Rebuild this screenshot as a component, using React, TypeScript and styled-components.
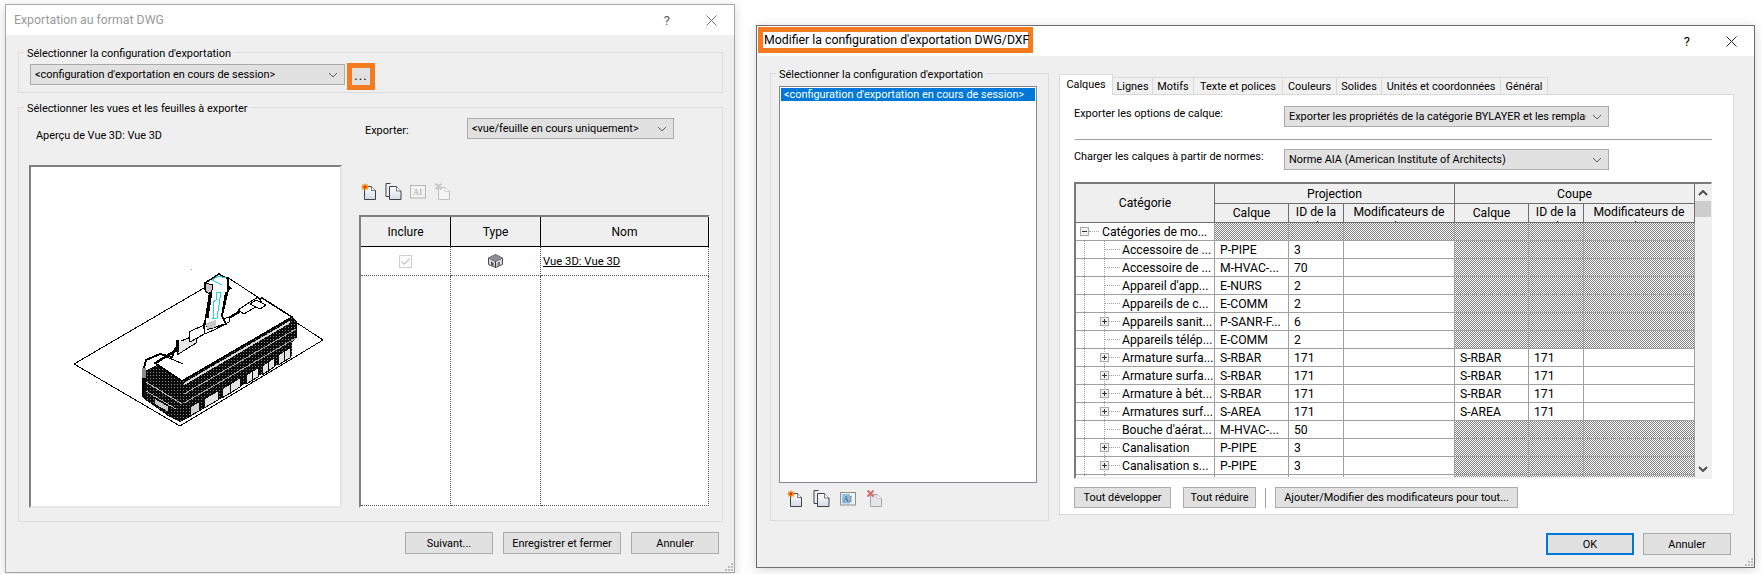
import type { ReactNode } from 'react'
import styled, { createGlobalStyle } from 'styled-components'

const HATCH = 'repeating-conic-gradient(#808080 0 25%, #ffffff 0 50%) 0 0 / 2px 2px'

const GlobalStyle = createGlobalStyle`
  html, body { margin: 0; padding: 0; background: #ffffff; }
  body {
    font-family: Roboto, "Open Sans", "Liberation Sans", sans-serif;
    font-size: 10.9px;
    color: #000;
  }
  * { box-sizing: border-box; }
`

interface LayerRow {
  name: string
  expander?: boolean
  layer: string
  id: string
  cut?: boolean
}

const layerRows: LayerRow[] = [
  { name: 'Accessoire de ...', layer: 'P-PIPE', id: '3' },
  { name: 'Accessoire de ...', layer: 'M-HVAC-...', id: '70' },
  { name: "Appareil d'app...", layer: 'E-NURS', id: '2' },
  { name: 'Appareils de c...', layer: 'E-COMM', id: '2' },
  { name: 'Appareils sanit...', expander: true, layer: 'P-SANR-F...', id: '6' },
  { name: 'Appareils télép...', layer: 'E-COMM', id: '2' },
  { name: 'Armature surfa...', expander: true, layer: 'S-RBAR', id: '171', cut: true },
  { name: 'Armature surfa...', expander: true, layer: 'S-RBAR', id: '171', cut: true },
  { name: 'Armature à bét...', expander: true, layer: 'S-RBAR', id: '171', cut: true },
  { name: 'Armatures surf...', expander: true, layer: 'S-AREA', id: '171', cut: true },
  { name: "Bouche d'aérat...", layer: 'M-HVAC-...', id: '50' },
  { name: 'Canalisation', expander: true, layer: 'P-PIPE', id: '3' },
  { name: 'Canalisation s...', expander: true, layer: 'P-PIPE', id: '3' },
  { name: '', layer: '', id: '' },
]

const tabs = ['Lignes', 'Motifs', 'Texte et polices', 'Couleurs', 'Solides', 'Unités et coordonnées', 'Général']
const tabWidths = [40, 41, 89, 54, 45, 119, 47]

function Chevron({ bold = false }: { bold?: boolean }) {
  return (
    <svg width="10" height="6" viewBox="0 0 10 6">
      <path d="M1 1 L5 5 L9 1" fill="none" stroke={bold ? '#505050' : '#606060'} strokeWidth={bold ? 2 : 1} />
    </svg>
  )
}

function CloseIcon() {
  return (
    <svg width="11" height="11" viewBox="0 0 11 11">
      <path d="M0.5 0.5 L10.5 10.5 M10.5 0.5 L0.5 10.5" stroke="#222" strokeWidth="1" />
    </svg>
  )
}

function Grip() {
  return (
    <svg width="8" height="8" viewBox="0 0 8 8" shapeRendering="crispEdges">
      <path d="M6 0h2v2H6zM3 3h2v2H3zM6 3h2v2H6zM0 6h2v2H0zM3 6h2v2H3zM6 6h2v2H6z" fill="#bdbdbd" />
    </svg>
  )
}

function NewIcon() {
  return (
    <svg width="16" height="17" viewBox="0 0 16 17">
      <defs>
        <linearGradient id="pageFill" x1="0" y1="0" x2="0" y2="1">
          <stop offset="0" stopColor="#ffffff" />
          <stop offset="1" stopColor="#d5dae6" />
        </linearGradient>
      </defs>
      <path d="M3.5 3.5 H10.5 L14.5 7.5 V16.5 H3.5 Z" fill="url(#pageFill)" stroke="#3d4148" />
      <path d="M10.5 3.5 V7.5 H14.5" fill="#fff" stroke="#3d4148" strokeWidth="0.7" />
      <path d="M4 0 L5 2 L7 1 L6.4 3 L8 4 L6.4 5 L7 7 L5 6 L4 8 L3 6 L1 7 L1.6 5 L0 4 L1.6 3 L1 1 L3 2 Z" fill="#f08a12" />
      <circle cx="4" cy="4" r="1.2" fill="#e02a10" />
    </svg>
  )
}

function CopyIcon() {
  return (
    <svg width="17" height="17" viewBox="0 0 17 17">
      <path d="M5.5 0.5 H1 V13.5 H4" fill="none" stroke="#3d4148" />
      <path d="M4.5 3.5 H11.5 L16 8 V16.5 H4.5 Z" fill="url(#pageFill)" stroke="#3d4148" />
      <path d="M11.5 3.5 V8 H16" fill="#fff" stroke="#3d4148" strokeWidth="0.7" />
    </svg>
  )
}

function RenameIcon({ active }: { active: boolean }) {
  return (
    <svg width="17" height="14" viewBox="0 0 17 14">
      <rect x="0.5" y="0.5" width="15" height="12.5" fill={active ? '#eef1f5' : '#f2f2f2'} stroke={active ? '#8f8f8f' : '#b5b5b5'} />
      {active && <rect x="2" y="2" width="8" height="9.5" fill="#8fbfe6" />}
      <text x="3" y="10" fontSize="8.5" fontFamily="Liberation Serif, serif" fill={active ? '#4a5a6a' : '#a8a8a8'}>
        AI
      </text>
    </svg>
  )
}

function DeleteIcon({ active }: { active: boolean }) {
  return (
    <svg width="16" height="17" viewBox="0 0 16 17">
      <path d="M3.5 4.5 H10 L14.5 8.5 V16.5 H3.5 Z" fill={active ? '#e3e5e9' : '#f4f4f4'} stroke={active ? '#a5a5a5' : '#bfbfbf'} />
      <path d="M10 4.5 V8.5 H14.5" fill="#fff" stroke="#bfbfbf" strokeWidth="0.7" />
      <path d="M0.5 0.5 L6.5 6.5 M6.5 0.5 L0.5 6.5" stroke={active ? '#d56b6b' : '#c9c9c9'} strokeWidth="2" />
    </svg>
  )
}

function HouseIcon() {
  return (
    <svg width="15" height="14" viewBox="0 0 15 14">
      <path d="M7.5 0.5 L14.5 4 V10.5 L7.5 13.5 L0.5 10.5 V4 Z" fill="#d8d8d8" stroke="#4c4c4c" />
      <path d="M0.5 4 L7.5 7.5 L14.5 4" fill="none" stroke="#4c4c4c" />
      <path d="M7.5 0.5 L14.5 4 L7.5 7.5 L0.5 4 Z" fill="#8c9094" />
      <path d="M7.5 7.5 V13.5" stroke="#333" />
      <path d="M3 7.5 L5.5 8.8 V12 L3 11 Z" fill="#555" />
      <path d="M12 7.5 L9.5 8.8 V12 L12 11 Z" fill="#777" />
    </svg>
  )
}

function CheckedDisabled() {
  return (
    <svg width="13" height="13" viewBox="0 0 13 13">
      <rect x="0.5" y="0.5" width="12" height="12" fill="#fbfbfb" stroke="#cfcfcf" />
      <path d="M2.5 6.5 L5.2 9.2 L10.5 3.5" fill="none" stroke="#c4c4c4" strokeWidth="1.2" />
    </svg>
  )
}

function BuildingDrawing() {
  return (
    <svg width="309" height="336" viewBox="31 167 309 336" shapeRendering="crispEdges">
      <defs>
        <pattern id="facade" width="3" height="3" patternUnits="userSpaceOnUse">
          <rect width="3" height="3" fill="#0c0c0c" />
          <rect width="1" height="1" fill="#8a8a8a" />
        </pattern>
      </defs>
      <g fill="none" stroke="#000" strokeWidth="1">
        <path d="M74 364 L204 288" />
        <path d="M227 277 L323 340 L180 426 L74 364" />
      </g>
      <path d="M196 340 L206 322 L228 318 L262 298 L292 317 L182 381 L157 365 Z" fill="#fff" />
      <path d="M182 381 L292 317 L297 322 L297 338 L292 342 L292 356 L188 418 L180 422 Z" fill="url(#facade)" />
      <path d="M143 372 L157 365 L182 381 L180 422 L168 416 L143 398 Z" fill="url(#facade)" />
      <path d="M184 384 L290 322" stroke="#d8d8d8" strokeWidth="2" fill="none" />
      <path d="M184 394 L296 329 M184 403 L296 338" stroke="#a8a8a8" strokeWidth="1" fill="none" />
      <path d="M146 382 L182 404 M146 391 L176 409" stroke="#b8b8b8" strokeWidth="1" fill="none" />
      <path d="M204 408 L218 400 V391 L204 399 Z M222 398 L240 387 V378 L222 389 Z M246 384 L258 377 V368 L246 375 Z M262 375 L274 367 V358 L262 366 Z M278 365 L290 358 V348 L278 355 Z" fill="#e4e4e4" stroke="#111" />
      <path d="M190 416 L199 411 V402 L190 407 Z" fill="#cfcfcf" stroke="#111" />
      <path d="M230 384 V394 M252 372 V382 M268 362 V372 M284 352 V362" stroke="#111" strokeWidth="1" />
      <path d="M154 398 L168 406 V412 L154 404 Z" fill="#c9c9c9" stroke="#111" />
      <path d="M155 363 L262 298 L292 317 L182 381 Z" fill="#fff" stroke="#000" strokeWidth="1.5" />
      <path d="M157 362 L260 299" stroke="#000" strokeWidth="2.5" />
      <path d="M143 372 L146 360 L160 354 L172 357 L176 347" fill="none" stroke="#000" strokeWidth="2" />
      <path d="M160 354 L183 364" stroke="#000" />
      <path d="M143 376 V397" stroke="#000" strokeWidth="3" />
      <rect x="142" y="368" width="4" height="10" fill="#8c8c8c" />
      <path d="M177 342 V355 L196 343 V335 L181 341" fill="#e8e8e8" stroke="#000" />
      <path d="M177 340 V352" stroke="#000" strokeWidth="3" />
      <path d="M189 332 L204 325 V334 L190 342 Z M203 324 L218 320 V328 L205 334 Z M216 321 L229 317 V322 L218 328 Z" fill="#fff" stroke="#000" />
      <path d="M238 310 L250 302 L258 297 L262 303 L244 314 Z" fill="#fff" stroke="#000" />
      <path d="M250 304 L256 300 L266 305 L260 309 Z" fill="#fff" stroke="#000" />
      <path d="M205 283 L219 274 L228 279 L228 291 L222 316 L226 324 L208 329 L205 322 L210 291 L205 289 Z" fill="#fff" stroke="#000" strokeWidth="1.5" />
      <path d="M205 283 L205 291 L211 295 L213 285 Z" fill="#c8c8c8" stroke="#000" />
      <path d="M206 323 L216 320 L216 327 L207 329 Z" fill="#c8c8c8" />
      <path d="M211 292 L207 318" stroke="#000" strokeWidth="3" />
      <path d="M226 292 L222 316" stroke="#000" strokeWidth="2" />
      <path d="M229 285 L227 290 L232 289 Z" fill="#000" />
      <path d="M212 280 L218 276 L226 278 M212 280 L222 285 M217 292 L221 292 L217 318 L213 318 L214 307 L213 302 L216 300 Z" fill="none" stroke="#19d5e6" strokeWidth="1" />
      <rect x="191" y="269" width="1" height="1" fill="#19d5e6" />
      <rect x="96" y="382" width="1" height="1" fill="#19d5e6" />
    </svg>
  )
}

function Group({ title, children, className }: { title: string; children: ReactNode; className?: string }) {
  return (
    <GroupBox className={className}>
      <GroupTitle>{title}</GroupTitle>
      {children}
    </GroupBox>
  )
}

function TreeRow({ row }: { row: LayerRow }) {
  return (
    <TreeCell>
      <RootGuide />
      <ChildGuide />
      {row.name && <ChildBranch />}
      {row.expander && <Expander $left={24} />}
      {row.name}
    </TreeCell>
  )
}

function GridRow({ row }: { row: LayerRow }) {
  const cutHatched = !row.cut
  return (
    <>
      <TreeRow row={row} />
      <DataCell>{row.layer}</DataCell>
      <DataCell>{row.id}</DataCell>
      <DataCell />
      <DataCell $hatched={cutHatched}>{row.cut && row.layer}</DataCell>
      <DataCell $hatched={cutHatched}>{row.cut && row.id}</DataCell>
      <DataCell $hatched={cutHatched} />
    </>
  )
}

export default function App() {
  return (
    <Desktop>
      <GlobalStyle />
      <ExportWindow>
        <TitleBar>
          <InactiveTitle>Exportation au format DWG</InactiveTitle>
          <TitleButtons $dim>
            <HelpMark>?</HelpMark>
            <CloseIcon />
          </TitleButtons>
        </TitleBar>
        <ExportBody>
          <SetupGroup title="Sélectionner la configuration d'exportation">
            <SetupRow>
              <SetupCombo>
                <span>&lt;configuration d'exportation en cours de session&gt;</span>
                <Chevron />
              </SetupCombo>
              <HighlightedDots>...</HighlightedDots>
            </SetupRow>
          </SetupGroup>
          <ViewsGroup title="Sélectionner les vues et les feuilles à exporter">
            <ViewsColumns>
              <PreviewColumn>
                <PreviewCaption>Aperçu de Vue 3D: Vue 3D</PreviewCaption>
                <PreviewFrame>
                  <BuildingDrawing />
                </PreviewFrame>
              </PreviewColumn>
              <SheetsColumn>
                <ExportRow>
                  <ExportLabel>Exporter:</ExportLabel>
                  <ExportCombo>
                    <span>&lt;vue/feuille en cours uniquement&gt;</span>
                    <Chevron />
                  </ExportCombo>
                </ExportRow>
                <IconRow>
                  <NewIcon />
                  <CopyIcon />
                  <RenameIcon active={false} />
                  <DeleteIcon active={false} />
                </IconRow>
                <SheetTable>
                  <SheetHead>Inclure</SheetHead>
                  <SheetHead>Type</SheetHead>
                  <SheetHead>Nom</SheetHead>
                  <SheetCell>
                    <CheckedDisabled />
                  </SheetCell>
                  <SheetCell>
                    <HouseIcon />
                  </SheetCell>
                  <SheetNameCell>Vue 3D: Vue 3D</SheetNameCell>
                  <SheetCell />
                  <SheetCell />
                  <SheetCell />
                </SheetTable>
              </SheetsColumn>
            </ViewsColumns>
          </ViewsGroup>
          <ExportFooter>
            <PushButton $width={88}>Suivant...</PushButton>
            <PushButton $width={118}>Enregistrer et fermer</PushButton>
            <PushButton $width={88}>Annuler</PushButton>
          </ExportFooter>
          <GripSlot>
            <Grip />
          </GripSlot>
        </ExportBody>
      </ExportWindow>

      <ModifyWindow>
        <TitleBar>
          <HighlightedTitle>Modifier la configuration d'exportation DWG/DXF</HighlightedTitle>
          <TitleButtons>
            <HelpMark>?</HelpMark>
            <CloseIcon />
          </TitleButtons>
        </TitleBar>
        <ModifyBody>
          <ModifyColumns>
            <SetupsGroup title="Sélectionner la configuration d'exportation">
              <SetupList>
                <SetupSelected>&lt;configuration d'exportation en cours de session&gt;</SetupSelected>
              </SetupList>
              <SetupIcons>
                <NewIcon />
                <CopyIcon />
                <RenameIcon active />
                <DeleteIcon active />
              </SetupIcons>
            </SetupsGroup>
            <TabsColumn>
              <TabStrip>
                <ActiveTab>Calques</ActiveTab>
                {tabs.map((tab, i) => (
                  <Tab key={tab} $width={tabWidths[i]}>
                    {tab}
                  </Tab>
                ))}
              </TabStrip>
              <TabPanel>
                <OptionRow>
                  <OptionLabel>Exporter les options de calque:</OptionLabel>
                  <OptionCombo>
                    <ClippedText>Exporter les propriétés de la catégorie BYLAYER et les remplacements</ClippedText>
                    <Chevron />
                  </OptionCombo>
                </OptionRow>
                <PanelRule />
                <OptionRow>
                  <OptionLabel>Charger les calques à partir de normes:</OptionLabel>
                  <OptionCombo>
                    <ClippedText>Norme AIA (American Institute of Architects)</ClippedText>
                    <Chevron />
                  </OptionCombo>
                </OptionRow>
                <LayerGridFrame>
                  <LayerGrid>
                    <CategoryHead>Catégorie</CategoryHead>
                    <BandHead>Projection</BandHead>
                    <BandHead>Coupe</BandHead>
                    <ColumnHead>Calque</ColumnHead>
                    <WrappedHead>ID de la couleur</WrappedHead>
                    <WrappedHead>Modificateurs de calque</WrappedHead>
                    <ColumnHead>Calque</ColumnHead>
                    <WrappedHead>ID de la couleur</WrappedHead>
                    <WrappedHead>Modificateurs de calque</WrappedHead>

                    <TreeCell>
                      <RootBranch />
                      <Expander $left={4} $open />
                      <RootLabel>Catégories de mo...</RootLabel>
                    </TreeCell>
                    {Array.from({ length: 6 }, (_, i) => (
                      <DataCell key={i} $hatched />
                    ))}

                    {layerRows.map((row, i) => (
                      <GridRow key={i} row={row} />
                    ))}
                  </LayerGrid>
                  <ScrollBar>
                    <ScrollArrow>
                      <FlippedChevron>
                        <Chevron bold />
                      </FlippedChevron>
                    </ScrollArrow>
                    <ScrollThumb />
                    <ScrollTrack />
                    <ScrollArrow>
                      <Chevron bold />
                    </ScrollArrow>
                  </ScrollBar>
                </LayerGridFrame>
                <GridActions>
                  <PushButton $width={97}>Tout développer</PushButton>
                  <PushButton $width={73}>Tout réduire</PushButton>
                  <ActionSeparator />
                  <PushButton $width={243}>Ajouter/Modifier des modificateurs pour tout...</PushButton>
                </GridActions>
              </TabPanel>
            </TabsColumn>
          </ModifyColumns>
          <ModifyFooter>
            <DefaultButton>OK</DefaultButton>
            <PushButton $width={88}>Annuler</PushButton>
          </ModifyFooter>
          <GripSlot>
            <Grip />
          </GripSlot>
        </ModifyBody>
      </ModifyWindow>
    </Desktop>
  )
}

const Desktop = styled.div`
  width: 1762px;
  height: 574px;
  display: flex;
  align-items: flex-start;
  gap: 21px;
  padding-left: 5px;
  overflow: hidden;
`

const WindowFrame = styled.div`
  display: flex;
  flex-direction: column;
  background: #efefef;
  box-shadow: 0 2px 10px rgba(0, 0, 0, 0.16);
`

const ExportWindow = styled(WindowFrame)`
  width: 730px;
  height: 569px;
  margin-top: 4px;
  border: 1px solid #a8a8a8;
`

const ModifyWindow = styled(WindowFrame)`
  width: 999px;
  height: 543px;
  margin-top: 25px;
  border: 1px solid #6d6d6d;
`

const TitleBar = styled.div`
  height: 30px;
  flex: none;
  display: flex;
  align-items: center;
  justify-content: space-between;
  background: #fff;
  font-size: 12.3px;
`

const InactiveTitle = styled.div`
  padding-left: 8px;
  color: #9a9a9a;
`

const HighlightedTitle = styled.div`
  height: 26px;
  width: 275px;
  margin: -2px 0 0 1px;
  padding-left: 1px;
  display: flex;
  align-items: center;
  white-space: nowrap;
  border: 5px solid #f47c20;
  background: #fff;
`

const TitleButtons = styled.div<{ $dim?: boolean }>`
  display: flex;
  align-items: center;
  gap: 36px;
  padding-right: 17px;
  opacity: ${p => (p.$dim ? 0.65 : 1)};
`

const HelpMark = styled.span`
  font-size: 13px;
`

const ExportBody = styled.div`
  position: relative;
  flex: 1;
  display: flex;
  flex-direction: column;
  padding: 17px 11px 0 12px;
`

const ModifyBody = styled.div`
  position: relative;
  flex: 1;
  display: flex;
  flex-direction: column;
`

const GroupBox = styled.div`
  position: relative;
  border: 1px solid #dcdcdc;
`

const GroupTitle = styled.div`
  position: absolute;
  top: -7px;
  left: 5px;
  padding: 0 3px;
  line-height: 15px;
  background: #efefef;
  white-space: nowrap;
`

const SetupGroup = styled(Group)`
  height: 41px;
  padding: 11px 11px 0;
`

const SetupRow = styled.div`
  height: 21px;
  display: flex;
  align-items: flex-start;
  gap: 2px;
`

const ComboBase = styled.div`
  height: 21px;
  display: flex;
  align-items: center;
  justify-content: space-between;
  background: #e1e1e1;
  border: 1px solid #ababab;
  padding: 0 6px 0 4px;
  white-space: nowrap;
`

const SetupCombo = styled(ComboBase)`
  width: 315px;
`

const HighlightedDots = styled.div`
  width: 28px;
  height: 27px;
  flex: none;
  margin-top: -1px;
  display: flex;
  align-items: center;
  justify-content: center;
  padding-bottom: 2px;
  font-size: 13px;
  letter-spacing: 1px;
  background: #e1e1e1;
  border: 5px solid #f47c20;
`

const ViewsGroup = styled(Group)`
  margin-top: 14px;
`

const ViewsColumns = styled.div`
  height: 413px;
  padding: 10px 11px 16px 10px;
  display: grid;
  grid-template-columns: 313px 351px;
  column-gap: 17px;
`

const PreviewColumn = styled.div`
  display: flex;
  flex-direction: column;
`

const PreviewCaption = styled.div`
  height: 47px;
  padding: 11px 0 0 7px;
  flex: none;
`

const PreviewFrame = styled.div`
  flex: 1;
  background: #fff;
  border: 2px solid #e6e6e6;
  border-top-color: #808080;
  border-left-color: #808080;
`

const SheetsColumn = styled.div`
  display: flex;
  flex-direction: column;
`

const ExportRow = styled.div`
  height: 21px;
  display: flex;
  align-items: center;
`

const ExportLabel = styled.div`
  width: 108px;
  padding: 4px 0 0 6px;
`

const ExportCombo = styled(ComboBase)`
  width: 207px;
`

const IconRow = styled.div`
  height: 17px;
  margin: 44px 0 15px;
  padding-left: 2px;
  display: flex;
  align-items: center;
  gap: 8px;
`

const SheetTable = styled.div`
  flex: 1;
  display: grid;
  grid-template-columns: 90px 90px 168px;
  grid-template-rows: 30px 29px 1fr;
  border: 2px solid #fff;
  border-top-color: #808080;
  border-left-color: #808080;
  background: #fff;
`

const SheetHead = styled.div`
  display: flex;
  align-items: center;
  justify-content: center;
  font-size: 12px;
  background: #efefef;
  border-right: 1px solid #000;
  border-bottom: 1px solid #000;
`

const SheetCell = styled.div`
  display: flex;
  align-items: center;
  justify-content: center;
  border-right: 1px dotted #555;
  border-bottom: 1px dotted #555;
`

const SheetNameCell = styled(SheetCell)`
  justify-content: flex-start;
  padding-left: 2px;
  font-size: 11.3px;
  text-decoration: underline;
`

const ExportFooter = styled.div`
  margin-top: 10px;
  padding-right: 4px;
  display: flex;
  justify-content: flex-end;
  gap: 10px;
`

const PushButton = styled.div<{ $width: number }>`
  width: ${p => p.$width}px;
  height: 22px;
  flex: none;
  display: flex;
  align-items: center;
  justify-content: center;
  white-space: nowrap;
  background: #e1e1e1;
  border: 1px solid #ababab;
`

const DefaultButton = styled(PushButton).attrs({ $width: 88 })`
  border: 2px solid #0078d7;
`

const GripSlot = styled.div`
  position: absolute;
  right: 1px;
  bottom: 1px;
  line-height: 0;
`

const ModifyColumns = styled.div`
  display: flex;
  align-items: flex-start;
  gap: 10px;
  padding: 17px 0 0 13px;
`

const SetupsGroup = styled(Group)`
  width: 279px;
  height: 448px;
  flex: none;
  padding: 12px 11px 0 8px;
`

const SetupList = styled.div`
  height: 397px;
  padding: 1px;
  background: #fff;
  border: 1px solid #828790;
`

const SetupSelected = styled.div`
  height: 13px;
  line-height: 13px;
  padding-left: 3px;
  color: #fff;
  background: #0078d7;
  white-space: nowrap;
`

const SetupIcons = styled.div`
  height: 17px;
  margin-top: 7px;
  padding-left: 8px;
  display: flex;
  align-items: center;
  gap: 10px;
`

const TabsColumn = styled.div`
  width: 675px;
  flex: none;
  margin-top: 1px;
  display: flex;
  flex-direction: column;
`

const TabStrip = styled.div`
  height: 21px;
  display: flex;
  align-items: flex-end;
  position: relative;
  z-index: 1;
  margin-bottom: -1px;
`

const Tab = styled.div<{ $width: number }>`
  width: ${p => p.$width}px;
  height: 18px;
  display: flex;
  align-items: center;
  justify-content: center;
  white-space: nowrap;
  background: #f0f0f0;
  border: 1px solid #d9d9d9;
  border-left: 0;
`

const ActiveTab = styled.div`
  width: 54px;
  height: 21px;
  display: flex;
  align-items: center;
  justify-content: center;
  padding-bottom: 2px;
  background: #fff;
  border: 1px solid #d9d9d9;
  border-bottom: 0;
`

const TabPanel = styled.div`
  height: 421px;
  padding: 11px 21px 0 14px;
  background: #fff;
  border: 1px solid #d9d9d9;
`

const OptionRow = styled.div`
  display: grid;
  grid-template-columns: 210px 325px;
  height: 21px;
`

const OptionLabel = styled.div`
  line-height: 16px;
  white-space: nowrap;
`

const OptionCombo = styled(ComboBase)`
  gap: 6px;
`

const ClippedText = styled.span`
  overflow: hidden;
  flex: 1;
`

const PanelRule = styled.div`
  height: 1px;
  margin: 12px 0 9px 1px;
  background: #a0a0a0;
`

const LayerGridFrame = styled.div`
  height: 297px;
  margin-top: 12px;
  display: flex;
  border: 2px solid #f0f0f0;
  border-top-color: #7a7a7a;
  border-left-color: #7a7a7a;
  border-right-width: 1px;
  overflow: hidden;
`

const LayerGrid = styled.div`
  flex: 1;
  display: grid;
  grid-template-columns: 139px 74px 55px 111px 74px 55px 111px;
  grid-auto-rows: 18px;
  grid-template-rows: 20px 19px;
  align-content: start;
  overflow: hidden;
  font-size: 12.2px;
`

const HeadCell = styled.div`
  display: flex;
  align-items: center;
  justify-content: center;
  background: #efefef;
  border-right: 1px solid #6e6e6e;
  border-bottom: 1px solid #6e6e6e;
  overflow: hidden;
`

const CategoryHead = styled(HeadCell)`
  grid-row: span 2;
`

const BandHead = styled(HeadCell)`
  grid-column: span 3;
`

const ColumnHead = styled(HeadCell)``

const WrappedHead = styled(HeadCell)`
  align-items: flex-start;
  text-align: center;
  line-height: 15px;
  padding: 1px 4px 0;
`

const DataCell = styled.div<{ $hatched?: boolean }>`
  padding-left: 5px;
  line-height: 18px;
  white-space: nowrap;
  overflow: hidden;
  background: ${p => (p.$hatched ? HATCH : '#fff')};
  border-right: 1px solid #a0a0a0;
  border-bottom: 1px solid #a0a0a0;
`

const TreeCell = styled(DataCell)`
  position: relative;
  padding-left: 46px;
`

const RootLabel = styled.span`
  margin-left: -20px;
`

const RootGuide = styled.span`
  position: absolute;
  left: 8px;
  top: 0;
  bottom: 0;
  border-left: 1px dotted #a0a0a0;
`

const ChildGuide = styled.span`
  position: absolute;
  left: 28px;
  top: 0;
  bottom: 0;
  border-left: 1px dotted #a0a0a0;
`

const ChildBranch = styled.span`
  position: absolute;
  left: 29px;
  width: 15px;
  top: 8px;
  border-top: 1px dotted #a0a0a0;
`

const RootBranch = styled.span`
  position: absolute;
  left: 13px;
  width: 10px;
  top: 8px;
  border-top: 1px dotted #a0a0a0;
`

const Expander = styled.span<{ $left: number; $open?: boolean }>`
  position: absolute;
  left: ${p => p.$left}px;
  top: 4px;
  width: 9px;
  height: 9px;
  background: #f0f0f0;
  border: 1px solid #a8a8a8;

  &::before {
    content: '';
    position: absolute;
    left: 1px;
    right: 1px;
    top: 3px;
    height: 1px;
    background: #333;
  }

  &::after {
    content: '';
    display: ${p => (p.$open ? 'none' : 'block')};
    position: absolute;
    top: 1px;
    bottom: 1px;
    left: 3px;
    width: 1px;
    background: #333;
  }
`

const ScrollBar = styled.div`
  width: 16px;
  flex: none;
  display: flex;
  flex-direction: column;
  background: #f0f0f0;
`

const ScrollArrow = styled.div`
  height: 17px;
  flex: none;
  display: flex;
  align-items: center;
  justify-content: center;
`

const FlippedChevron = styled.span`
  display: flex;
  transform: rotate(180deg);
`

const ScrollThumb = styled.div`
  height: 16px;
  flex: none;
  background: #cdcdcd;
`

const ScrollTrack = styled.div`
  flex: 1;
`

const GridActions = styled.div`
  margin-top: 8px;
  height: 21px;
  display: flex;
  align-items: center;
  gap: 12px;
  & > div {
    height: 21px;
  }
`

const ActionSeparator = styled.span`
  width: 1px;
  height: 20px;
  margin: 0 -3px 0 -3px;
  background: #a0a0a0;
`

const ModifyFooter = styled.div`
  margin-top: 12px;
  padding-right: 23px;
  display: flex;
  justify-content: flex-end;
  gap: 9px;
`
